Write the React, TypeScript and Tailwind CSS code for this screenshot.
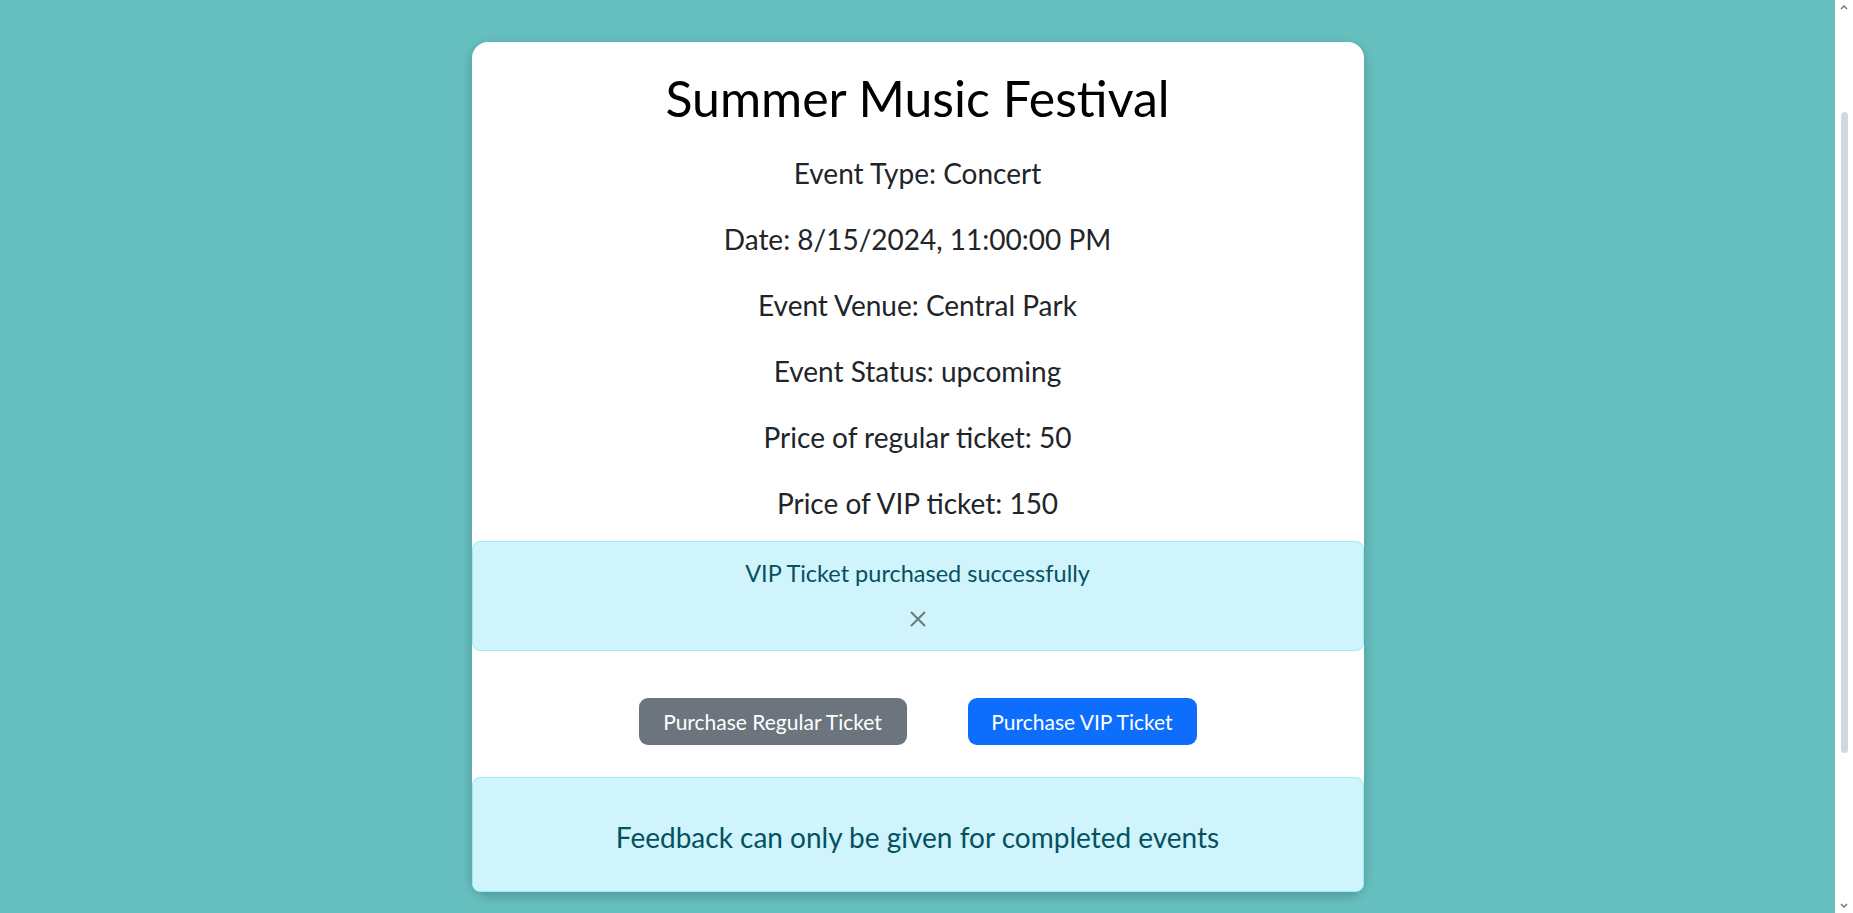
import React, { useLayoutEffect } from "react";

const lines = [
  "Event Type: Concert",
  "Date: 8/15/2024, 11:00:00 PM",
  "Event Venue: Central Park",
  "Event Status: upcoming",
  "Price of regular ticket: 50",
  "Price of VIP ticket: 150",
];

function FakeScrollbar() {
  return (
    <div className="fixed top-0 right-0 h-screen w-[18px] bg-white flex flex-col items-center">
      <svg width="10" height="12" viewBox="0 0 10 12" className="mt-[2px]">
        <path d="M2 7 L5 4 L8 7" stroke="#707070" strokeWidth="1.4" fill="none" />
      </svg>
      <div className="mt-[98px] h-[641px] w-[7px] rounded-full bg-[#d0d8e0]" />
      <div className="flex-1" />
      <svg width="10" height="12" viewBox="0 0 10 12" className="mb-[2px]">
        <path d="M2 5 L5 8 L8 5" stroke="#707070" strokeWidth="1.4" fill="none" />
      </svg>
    </div>
  );
}

export default function App() {
  useLayoutEffect(() => {
    window.scrollTo(0, 135);
  }, []);

  return (
    <div
      className="min-h-screen bg-[#66bfbf] pr-[18px] pt-[177px] pb-[227px]"
      style={{ fontFamily: "Lato, 'Noto Sans', sans-serif" }}
    >
      <div className="mx-auto w-[892px] rounded-[16px] bg-white shadow-[0_4px_12px_rgba(0,0,0,0.22)] flex flex-col items-stretch">
        <h1 className="pt-[26px] text-center text-[50px] leading-[60px] font-normal text-black">
          Summer Music Festival
        </h1>
        <div className="mt-[23.5px] flex flex-col gap-[24.2px]">
          {lines.map((t) => (
            <p key={t} className="text-center text-[28px] leading-[42px] text-[#212529]">
              {t}
            </p>
          ))}
        </div>
        <div className="mt-[17px] rounded-[8px] border border-[#9eeaf9] bg-[#cff4fc] pt-[13px] pb-[23px] flex flex-col items-center">
          <p className="text-[23.5px] leading-[36px] text-[#055160]">VIP Ticket purchased successfully</p>
          <button className="mt-[20px] w-[16px] h-[16px] flex items-center justify-center" aria-label="Close">
            <svg width="16" height="16" viewBox="0 0 16 16">
              <path d="M1 1 L15 15 M15 1 L1 15" stroke="#000" strokeOpacity="0.5" strokeWidth="2" />
            </svg>
          </button>
        </div>
        <div className="mt-[47px] flex justify-center gap-[61px]">
          <button className="h-[47px] w-[268px] rounded-[9px] bg-[#6c757d] text-white text-[21px]">
            Purchase Regular Ticket
          </button>
          <button className="h-[47px] w-[229px] rounded-[9px] bg-[#0d6efd] text-white text-[21px]">
            Purchase VIP Ticket
          </button>
        </div>
        <div className="mt-[32px] rounded-[8px] border border-[#9eeaf9] bg-[#cff4fc] pt-[38px] pb-[33px]">
          <p className="text-center text-[28px] leading-[42px] text-[#055160]">
            Feedback can only be given for completed events
          </p>
        </div>
      </div>
      <FakeScrollbar />
    </div>
  );
}
